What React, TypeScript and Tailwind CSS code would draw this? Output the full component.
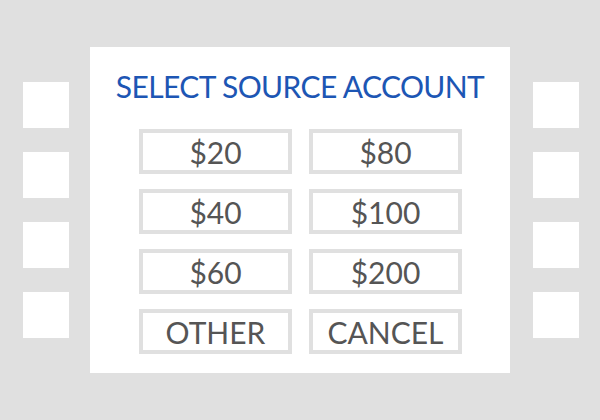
import React from "react";

const Square = () => <div className="w-[46px] h-[46px] bg-white" />;

const Btn = ({ label }: { label: string }) => (
  <div className="h-[45px] border-4 border-[#e0e0e0] bg-white flex items-center justify-center text-[30px] leading-none text-[#555555]">
    {label}
  </div>
);

export default function App() {
  const labels = ["$20", "$80", "$40", "$100", "$60", "$200", "OTHER", "CANCEL"];
  return (
    <div
      className="w-[600px] h-[420px] bg-[#e0e0e0] flex items-start"
      style={{ fontFamily: "Lato, 'Open Sans', sans-serif" }}
    >
      <div className="ml-[23px] mt-[82px] flex flex-col gap-[24px]">
        <Square />
        <Square />
        <Square />
        <Square />
      </div>
      <div className="ml-[21px] mt-[47px] w-[420px] h-[326px] bg-white flex flex-col items-center pt-[24px]">
        <div className="text-[30px] leading-[30px] tracking-[-0.6px] text-[#1d56b4]">SELECT SOURCE ACCOUNT</div>
        <div className="mt-[28px] grid grid-cols-[153px_153px] gap-x-[17px] gap-y-[15px] ml-[1px]">
          {labels.map((l) => (
            <Btn key={l} label={l} />
          ))}
        </div>
      </div>
      <div className="ml-[23px] mt-[82px] flex flex-col gap-[24px]">
        <Square />
        <Square />
        <Square />
        <Square />
      </div>
    </div>
  );
}
